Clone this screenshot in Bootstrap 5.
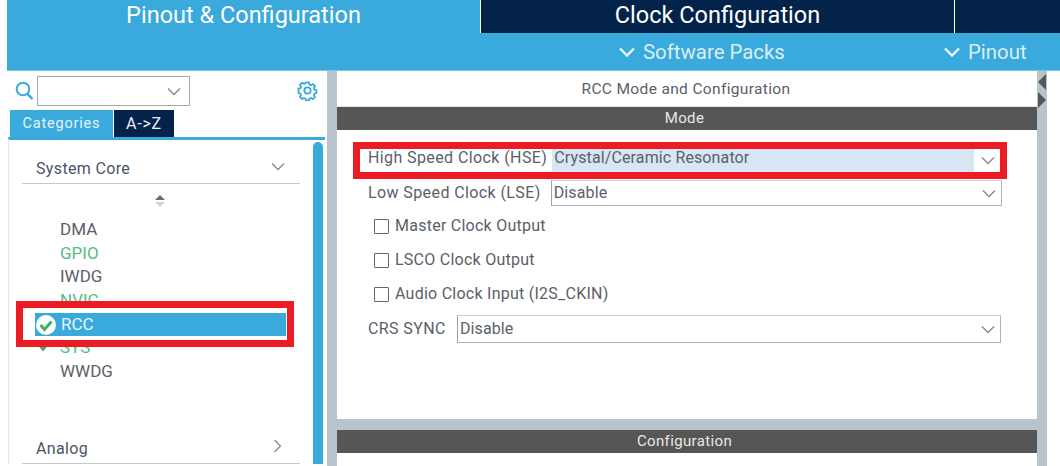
<!DOCTYPE html>
<html>
<head>
  <meta charset="utf-8">
  <title>RCC Mode and Configuration</title>
  <link href="https://cdn.jsdelivr.net/npm/bootstrap@5.3.2/dist/css/bootstrap.min.css" rel="stylesheet">
  <style>
    html, body { height: 466px; overflow: hidden; }
    body { font-family: Roboto, "Liberation Sans", sans-serif; color: #5b606a; font-size: 16px; position: relative; background: #fff; }
    .top-wrap { margin-left: 7px; background: #3aa9dc; height: 71px; border-bottom: 1px solid #7cc6e8; }
    .top-tabs { height: 33px; }
    .top-tab { height: 33px; font-size: 23.5px; line-height: 31px; text-align: center; color: #fff; }
    .tab-one { width: 473px; }
    .tab-two { width: 474px; background: #03234b; border-left: 1px solid #fff; }
    .tab-three { flex: 1; background: #03234b; border-left: 1px solid #fff; }
    .sub-bar { height: 37px; color: #d9eef8; font-size: 20.4px; padding: 1px 0 0 611px; }
    .sub-item svg { margin-right: 7px; }
    .sub-wide { width: 325px; }
    .work { height: 395px; }
    .left-col { width: 327px; }
    .split { width: 10px; background: #b8c4cb; }
    .main-col { width: 700px; }
    .side-strip { width: 10px; background: #b8c4cb; position: relative; }
    .arrow-l, .arrow-r { width: 0; height: 0; border-top: 8px solid transparent; border-bottom: 8px solid transparent; position: absolute; }
    .arrow-l { border-right: 8px solid #555655; left: 1px; top: 3px; }
    .arrow-r { border-left: 8px solid #555655; left: 1px; top: 21px; }
    .search-row { height: 38px; padding: 2px 9px 0 15px; }
    .combo-box { width: 153px; height: 30px; border: 1px solid #a9a9a9; margin-left: 3px; padding-right: 8px; }
    .gear-wrap { margin-left: auto; margin-top: -2px; }
    .tab-row { padding-left: 10px; height: 27px; margin-top: 1px; letter-spacing: .8px; font-size: 14.5px; }
    .tab-cat { width: 103px; background: #3aa9dc; color: #e6f4fb; line-height: 27px; text-align: center; margin-right: 1px; }
    .tab-az { width: 60px; background: #03234b; color: #e6f0f6; line-height: 27px; text-align: center; font-size: 16px; }
    .cat-panel { margin: 0 2px 0 8px; height: 327px; border-top: 3px solid #3aa9dc; border-left: 1px solid #e4e8eb; position: relative; overflow: hidden; }
    .scroll-thumb { position: absolute; right: 2px; top: 2px; width: 10px; height: 340px; background: #3aa9dc; border-radius: 5px 5px 0 0; }
    .cat-head { margin: 0 25px 0 13px; height: 44px; padding: 15px 0 0 14px; border-bottom: 1px solid #c3cbd0; letter-spacing: .35px; color: #4a5468; }
    .cat-head svg { margin-right: 15px; margin-top: -6px; }
    .cat-head-low { margin-top: 50px; height: 30px; padding-top: 2px; }
    .cat-head-low svg { margin-right: 18px; }
    .sort-mark { margin-left: 146px; height: 34px; padding-top: 11px; gap: 2px; width: 10px; }
    .sort-up, .sort-down { width: 0; height: 0; border-left: 5px solid transparent; border-right: 5px solid transparent; }
    .sort-up { border-bottom: 5px solid #6a6f74; }
    .sort-down { border-top: 5px solid #cfd3d6; }
    .pin-list { margin: 0; padding: 0; list-style: none; }
    .pin-row { height: 23.7px; line-height: 23px; padding-left: 51px; font-size: 17px; position: relative; }
    .pin-green { color: #56bd7d; }
    .pin-active { background: #3aa9dc; color: #e8f5fb; margin: 0 39px 0 26px; padding-left: 26px; }
    .pin-active svg { position: absolute; left: 0; top: 1px; }
    .pin-row.pin-sys svg { position: absolute; left: 27px; top: 2px; }
    .main-title { height: 36px; text-align: center; line-height: 36px; font-size: 15.5px; letter-spacing: .35px; border-bottom: 1px solid #e2e5e7; padding-right: 2px; }
    .dark-bar { height: 23px; background: #555655; color: #e8e8e8; text-align: center; font-size: 15px; line-height: 23px; letter-spacing: .35px; padding-right: 5px; }
    .mode-body { height: 289px; padding-top: 19px; letter-spacing: .4px; }
    .field-row { padding-left: 31px; }
    .field-label { white-space: nowrap; }
    .select-box { height: 26px; border: 1px solid #b0b5b8; border-left-color: #9da3a7; border-top-color: #c9cdcf; padding-left: 2px; color: #5b606a; letter-spacing: .12px; }
    .select-box svg { margin-left: auto; margin-right: 5px; flex: none; }
    .hse-row { height: 23px; align-items: flex-start; line-height: 18px; }
    .hse-select { width: 448px; margin-left: 5px; height: 23px; border: 0; padding: 0; }
    .hse-fill { width: 422px; height: 23px; background: #d6e6f4; padding-left: 2px; flex: none; }
    .lse-row { margin-top: 8px; height: 26px; }
    .lse-select { width: 451px; margin-left: 10px; }
    .check-row { height: 34px; padding-left: 37px; letter-spacing: .25px; }
    .check-first { margin-top: 3px; }
    .square-check { width: 15px; height: 15px; border: 1px solid #666; border-radius: 1px; margin-right: 6px; flex: none; }
    .crs-row { margin-top: 4px; height: 28px; }
    .crs-select { width: 544px; margin-left: 11px; height: 28px; }
    .gap-bar { height: 11px; background: #b8c4cb; }
    .red-frame { position: absolute; border: 7px solid #ed1c24; pointer-events: none; }
    .red-rcc { left: 16px; top: 301px; width: 278px; height: 46px; }
    .red-hse { left: 353px; top: 142px; width: 654px; height: 37px; }
  </style>
</head>
<body>
  <div class="top-wrap">
    <div class="d-flex top-tabs">
      <div class="top-tab tab-one">Pinout &amp; Configuration</div>
      <div class="top-tab tab-two">Clock Configuration</div>
      <div class="top-tab tab-three"></div>
    </div>
    <div class="d-flex align-items-center sub-bar">
      <div class="sub-item sub-wide d-flex align-items-center">
        <svg width="18" height="12" viewBox="0 0 18 12"><path d="M2 2.5 9 9.5 16 2.5" fill="none" stroke="#e6f4fb" stroke-width="2.4"/></svg>
        <span>Software Packs</span>
      </div>
      <div class="sub-item d-flex align-items-center">
        <svg width="18" height="12" viewBox="0 0 18 12"><path d="M2 2.5 9 9.5 16 2.5" fill="none" stroke="#e6f4fb" stroke-width="2.4"/></svg>
        <span>Pinout</span>
      </div>
    </div>
  </div>

  <div class="d-flex work">
    <div class="left-col">
      <div class="d-flex align-items-center search-row">
        <svg width="19" height="20" viewBox="0 0 19 20"><circle cx="8" cy="8" r="6.3" fill="none" stroke="#3aa9dc" stroke-width="2"/><path d="M12.5 12.8 17.5 18" stroke="#3aa9dc" stroke-width="2.4"/></svg>
        <div class="combo-box d-flex align-items-center justify-content-end">
          <svg width="14" height="9" viewBox="0 0 14 9"><path d="M1 1.5 7 7.5 13 1.5" fill="none" stroke="#888" stroke-width="1.3"/></svg>
        </div>
        <div class="gear-wrap">
          <svg width="21" height="21" viewBox="0 0 21 21"><path d="M8.8 1.5h3.4l.5 2.4 1.7.7 2.1-1.3 2.4 2.4-1.3 2.1.7 1.7 2.2.5v3.4l-2.2.5-.7 1.7 1.3 2.1-2.4 2.4-2.1-1.3-1.7.7-.5 2.1H8.8l-.5-2.1-1.7-.7-2.1 1.3-2.4-2.4 1.3-2.1-.7-1.7-2.2-.5V8.5l2.2-.5.7-1.7-1.3-2.1 2.4-2.4 2.1 1.3 1.7-.7z" transform="translate(1.05 1.05) scale(.9)" fill="none" stroke="#3aa9dc" stroke-width="2" stroke-linejoin="round"/><circle cx="10.5" cy="10.5" r="3.2" fill="none" stroke="#3aa9dc" stroke-width="1.8"/></svg>
        </div>
      </div>
      <div class="d-flex tab-row">
        <div class="tab-cat">Categories</div>
        <div class="tab-az">A-&gt;Z</div>
      </div>
      <div class="cat-panel">
        <div class="scroll-thumb"></div>
        <div class="cat-head d-flex justify-content-between align-items-center">
          <span>System Core</span>
          <svg width="14" height="9" viewBox="0 0 14 9"><path d="M1 1.5 7 7.5 13 1.5" fill="none" stroke="#888" stroke-width="1.3"/></svg>
        </div>
        <div class="sort-mark d-flex flex-column align-items-center">
          <div class="sort-up"></div>
          <div class="sort-down"></div>
        </div>
        <ul class="pin-list">
          <li class="pin-row">DMA</li>
          <li class="pin-row pin-green">GPIO</li>
          <li class="pin-row">IWDG</li>
          <li class="pin-row pin-green">NVIC</li>
          <li class="pin-row pin-active">
            <svg width="22" height="22" viewBox="0 0 22 22"><circle cx="11" cy="11" r="10" fill="#fff"/><path d="M5.5 11 9.5 15.5 16.5 7.5" fill="none" stroke="#3fae6a" stroke-width="3"/></svg>
            RCC
          </li>
          <li class="pin-row pin-green pin-sys">
            <svg width="16" height="16" viewBox="0 0 16 16"><path d="M2 5 7 11 14 3" fill="none" stroke="#3fae6a" stroke-width="3.4"/></svg>
            SYS
          </li>
          <li class="pin-row">WWDG</li>
        </ul>
        <div class="cat-head cat-head-low d-flex justify-content-between align-items-center">
          <span>Analog</span>
          <svg width="9" height="14" viewBox="0 0 9 14"><path d="M1.5 1 7.5 7 1.5 13" fill="none" stroke="#888" stroke-width="1.3"/></svg>
        </div>
      </div>
    </div>

    <div class="split"></div>

    <div class="main-col">
      <div class="main-title">RCC Mode and Configuration</div>
      <div class="dark-bar">Mode</div>
      <div class="mode-body">
        <div class="d-flex field-row hse-row">
          <span class="field-label">High Speed Clock (HSE)</span>
          <div class="select-box hse-select d-flex align-items-center">
            <div class="hse-fill">Crystal/Ceramic Resonator</div>
            <svg width="14" height="9" viewBox="0 0 14 9"><path d="M1 1.5 7 7.5 13 1.5" fill="none" stroke="#888" stroke-width="1.3"/></svg>
          </div>
        </div>
        <div class="d-flex align-items-center field-row lse-row">
          <span class="field-label">Low Speed Clock (LSE)</span>
          <div class="select-box lse-select d-flex align-items-center">
            <span>Disable</span>
            <svg width="14" height="9" viewBox="0 0 14 9"><path d="M1 1.5 7 7.5 13 1.5" fill="none" stroke="#888" stroke-width="1.3"/></svg>
          </div>
        </div>
        <div class="d-flex align-items-center check-row check-first"><span class="square-check"></span>Master Clock Output</div>
        <div class="d-flex align-items-center check-row"><span class="square-check"></span>LSCO Clock Output</div>
        <div class="d-flex align-items-center check-row"><span class="square-check"></span>Audio Clock Input (I2S_CKIN)</div>
        <div class="d-flex align-items-center field-row crs-row">
          <span class="field-label">CRS SYNC</span>
          <div class="select-box crs-select d-flex align-items-center">
            <span>Disable</span>
            <svg width="14" height="9" viewBox="0 0 14 9"><path d="M1 1.5 7 7.5 13 1.5" fill="none" stroke="#888" stroke-width="1.3"/></svg>
          </div>
        </div>
      </div>
      <div class="gap-bar"></div>
      <div class="dark-bar">Configuration</div>
    </div>

    <div class="side-strip">
      <div class="arrow-l"></div>
      <div class="arrow-r"></div>
    </div>
  </div>

  <div class="red-frame red-rcc"></div>
  <div class="red-frame red-hse"></div>

  <script src="https://cdn.jsdelivr.net/npm/bootstrap@5.3.2/dist/js/bootstrap.bundle.min.js"></script>
</body>
</html>
